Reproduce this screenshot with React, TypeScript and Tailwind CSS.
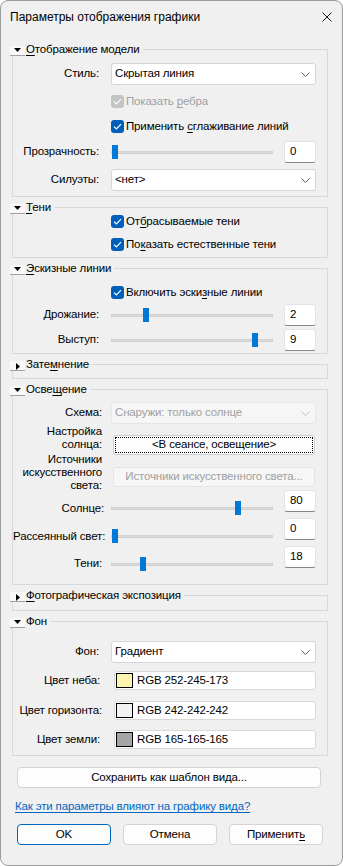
import React from "react";

const font = "font-['Liberation_Sans',Arial,sans-serif]";

function U({ children }: { children: React.ReactNode }) {
  return <span className="underline underline-offset-[2px] decoration-[1px]">{children}</span>;
}

function Tri({ open }: { open: boolean }) {
  return (
    <span className="w-[15px] h-[10px] bg-[#f9f9f9] border-b border-[#a0a0a0] flex items-start justify-center shrink-0">
      {open ? (
        <svg width="7" height="4" viewBox="0 0 7 4" className="mt-[2px]">
          <polygon points="0,0 7,0 3.5,4" fill="#000" />
        </svg>
      ) : (
        <svg width="4" height="7" viewBox="0 0 4 7" className="mt-[2px] ml-[1px]">
          <polygon points="0,0 4,3.5 0,7" fill="#000" />
        </svg>
      )}
    </span>
  );
}

function Group({
  title,
  open = true,
  children,
  className = "",
}: {
  title: React.ReactNode;
  open?: boolean;
  children?: React.ReactNode;
  className?: string;
}) {
  return (
    <fieldset className={`ml-[11px] w-[316px] border border-[#d9d9d9] ${className}`}>
      <legend className="-ml-[3px] pr-[3px] flex items-end h-[14px]">
        <Tri open={open} />
        <span className="ml-[1px] self-center leading-[14px]">{title}</span>
      </legend>
      {children}
    </fieldset>
  );
}

function Check({ disabled }: { disabled?: boolean }) {
  return (
    <span
      className={`w-[13px] h-[13px] rounded-[3px] flex items-center justify-center shrink-0 ${
        disabled ? "bg-[#c4c4c4]" : "bg-[#005fb8]"
      }`}
    >
      <svg width="9" height="7" viewBox="0 0 9 7">
        <path d="M1 3.6 L3.4 5.9 L8 1.2" stroke="#fff" strokeWidth="1.2" fill="none" />
      </svg>
    </span>
  );
}

function CheckRow({
  children,
  disabled,
  className = "",
}: {
  children: React.ReactNode;
  disabled?: boolean;
  className?: string;
}) {
  return (
    <div className={`flex items-center h-[14px] pl-[98px] ${className}`}>
      <Check disabled={disabled} />
      <span className={`ml-[2px] leading-[14px] ${disabled ? "text-[#a0a0a0]" : ""}`}>{children}</span>
    </div>
  );
}

function Chevron({ light }: { light?: boolean }) {
  return (
    <svg width="9" height="5" viewBox="0 0 9 5">
      <path d="M0.5 0.5 L4.5 4.5 L8.5 0.5" stroke={light ? "#c2c2c2" : "#5c5c5c"} strokeWidth="1" fill="none" />
    </svg>
  );
}

function Select({ value, disabled }: { value: string; disabled?: boolean }) {
  return (
    <div
      className={`w-[205px] h-[22px] rounded-[3px] border flex items-center justify-between pl-[3px] pr-[5px] ${
        disabled ? "bg-[#f6f6f6] border-[#e6e6e6] text-[#a0a0a0]" : "bg-white border-[#d6d6d6]"
      }`}
    >
      <span>{value}</span>
      <Chevron light={disabled} />
    </div>
  );
}

function Slider({ pos }: { pos: number }) {
  return (
    <div className="relative w-[162px] h-[14px] flex items-center shrink-0">
      <div className="w-full h-[3px] bg-[#dcdcdc] border border-[#d0d0d0]" />
      <div className="absolute top-0 w-[6px] h-[14px] bg-[#0078d4]" style={{ left: pos }} />
    </div>
  );
}

function NumBox({ value }: { value: string }) {
  return (
    <div className="w-[32px] h-[22px] bg-white border border-[#e3e3e3] border-b-[#868686] rounded-[3px] pl-[5px] flex items-center shrink-0">
      {value}
    </div>
  );
}

function ColorField({ color, text }: { color: string; text: string }) {
  return (
    <div className="ml-[14px] w-[202px] h-[19px] bg-white border border-[#d9d9d9] rounded-[3px] flex items-center">
      <span className="ml-[1px] w-[17px] h-[15px] border border-black shrink-0" style={{ background: color }} />
      <span className="ml-[4px]">{text}</span>
    </div>
  );
}

function Btn({
  children,
  primary,
  className = "",
}: {
  children: React.ReactNode;
  primary?: boolean;
  className?: string;
}) {
  return (
    <div
      className={`h-[21px] bg-[#fdfdfd] rounded-[4px] border flex items-center justify-center ${
        primary ? "border-[#0067c0]" : "border-[#d3d3d3]"
      } ${className}`}
    >
      {children}
    </div>
  );
}

export default function App() {
  return (
    <div className={`min-h-screen bg-white ${font} text-[11.5px] tracking-[-0.15px] text-black`}>
      <div className="w-[343px] h-[866px] bg-[#f0f0f0] border border-[#9b9b9b] rounded-[8px] flex flex-col">
        {/* title bar */}
        <div className="h-[31px] flex items-center justify-between pl-[9px] pr-[10px]">
          <span className="text-[12px] tracking-normal">Параметры отображения графики</span>
          <svg width="10" height="10" viewBox="0 0 10 10">
            <path d="M0.5 0.5 L9.5 9.5 M9.5 0.5 L0.5 9.5" stroke="#1a1a1a" strokeWidth="1" />
          </svg>
        </div>

        {/* G1 */}
        <Group
          className="mt-[10px] pb-[5px]"
          title={
            <>
              <U>О</U>тображение модели
            </>
          }
        >
          <div className="flex items-center mt-[7px]">
            <div className="w-[86px] text-right">Стиль:</div>
            <div className="ml-[12px]">
              <Select value="Скрытая линия" />
            </div>
          </div>
          <CheckRow disabled className="mt-[9px]">
            Показать <U>р</U>ебра
          </CheckRow>
          <CheckRow className="mt-[11px]">
            Применить <U>с</U>глаживание линий
          </CheckRow>
          <div className="flex items-center mt-[8px] h-[22px]">
            <div className="w-[86px] text-right">Прозрачность:</div>
            <div className="ml-[12px]">
              <Slider pos={1} />
            </div>
            <div className="ml-[11px]">
              <NumBox value="0" />
            </div>
          </div>
          <div className="flex items-center mt-[6px]">
            <div className="w-[86px] text-right">Силуэты:</div>
            <div className="ml-[12px]">
              <Select value="<нет>" />
            </div>
          </div>
        </Group>

        {/* G2 */}
        <Group
          className="mt-[3px] pb-[6px]"
          title={
            <>
              <U>Т</U>ени
            </>
          }
        >
          <CheckRow>
            От<U>б</U>расываемые тени
          </CheckRow>
          <CheckRow className="mt-[9px]">
            По<U>к</U>азать естественные тени
          </CheckRow>
        </Group>

        {/* G3 */}
        <Group
          className="mt-[3px] pb-[2px]"
          title={
            <>
              <U>Э</U>скизные линии
            </>
          }
        >
          <CheckRow className="mt-[10px]">
            Включить эски<U>з</U>ные линии
          </CheckRow>
          <div className="flex items-center mt-[5px] h-[22px]">
            <div className="w-[86px] text-right">Дрожание:</div>
            <div className="ml-[12px]">
              <Slider pos={32} />
            </div>
            <div className="ml-[11px]">
              <NumBox value="2" />
            </div>
          </div>
          <div className="flex items-center mt-[3px] h-[22px]">
            <div className="w-[86px] text-right">Выступ:</div>
            <div className="ml-[12px]">
              <Slider pos={141} />
            </div>
            <div className="ml-[11px]">
              <NumBox value="9" />
            </div>
          </div>
        </Group>

        {/* G4 */}
        <Group
          open={false}
          className="mt-[3px]"
          title={
            <>
              Зате<U>м</U>нение
            </>
          }
        >
          <div className="h-[7px]" />
        </Group>

        {/* G5 */}
        <Group
          className="mt-[3px] pb-[13px]"
          title={
            <>
              Осве<U>щ</U>ение
            </>
          }
        >
          <div className="flex items-center mt-[6px]">
            <div className="w-[89px] text-right">Схема:</div>
            <div className="ml-[9px]">
              <Select value="Снаружи: только солнце" disabled />
            </div>
          </div>
          <div className="flex items-start mt-[0px]">
            <div className="w-[89px] text-right leading-[13px] mt-[1px]">
              Настройка
              <br />
              солнца:
            </div>
            <div className="ml-[11px] mt-[11px] w-[202px] h-[20px] bg-[#fdfdfd] border border-[#cfcfcf] rounded-[3px] p-[1px]">
              <div className="w-full h-full border border-dotted border-black flex items-center justify-center">
                &lt;В сеансе, освещение&gt;
              </div>
            </div>
          </div>
          <div className="flex items-start -mt-[2px]">
            <div className="w-[89px] text-right leading-[13px]">
              Источники
              <br />
              искусственного
              <br />
              света:
            </div>
            <div className="ml-[11px] mt-[14px] w-[202px] h-[20px] bg-[#f6f6f6] border border-[#e4e4e4] rounded-[3px] flex items-center justify-center text-[#a0a0a0]">
              Источники искусственного света...
            </div>
          </div>
          <div className="flex items-start -mt-[2px]">
            <div className="w-[91px] text-right mt-[11px] leading-[14px] whitespace-nowrap">Солнце:</div>
            <div className="ml-[7px] mt-[11px]">
              <Slider pos={124} />
            </div>
            <div className="ml-[11px]">
              <NumBox value="80" />
            </div>
          </div>
          <div className="flex items-start mt-[3px]">
            <div className="w-[92px] text-right mt-[11px] leading-[14px] whitespace-nowrap">Рассеянный свет:</div>
            <div className="ml-[6px] mt-[11px]">
              <Slider pos={1} />
            </div>
            <div className="ml-[11px]">
              <NumBox value="0" />
            </div>
          </div>
          <div className="flex items-start mt-[3px]">
            <div className="w-[89px] text-right mt-[10px] leading-[14px]">Тени:</div>
            <div className="ml-[9px] mt-[11px]">
              <Slider pos={29} />
            </div>
            <div className="ml-[11px]">
              <NumBox value="18" />
            </div>
          </div>
        </Group>

        {/* G6 */}
        <Group
          open={false}
          className="mt-[3px]"
          title={
            <>
              <U>Ф</U>отографическая экспозиция
            </>
          }
        >
          <div className="h-[8px]" />
        </Group>

        {/* G7 */}
        <Group className="mt-[3px] pb-[6px]" title="Фон">
          <div className="flex items-center mt-[13px]">
            <div className="w-[86px] text-right">Фон:</div>
            <div className="ml-[12px]">
              <Select value="Градиент" />
            </div>
          </div>
          <div className="flex items-center mt-[8px]">
            <div className="w-[87px] text-right whitespace-nowrap">Цвет неба:</div>
            <ColorField color="rgb(252,245,173)" text="RGB 252-245-173" />
          </div>
          <div className="flex items-center mt-[11px]">
            <div className="w-[89px] text-right whitespace-nowrap">Цвет горизонта:</div>
            <div className="-ml-[2px]">
              <ColorField color="rgb(242,242,242)" text="RGB 242-242-242" />
            </div>
          </div>
          <div className="flex items-center mt-[10px]">
            <div className="w-[87px] text-right whitespace-nowrap">Цвет земли:</div>
            <ColorField color="rgb(165,165,165)" text="RGB 165-165-165" />
          </div>
        </Group>

        <Btn className="mt-[11px] ml-[16px] w-[304px]">Сохранить как шаблон вида...</Btn>

        <div className="mt-[11px] ml-[14px] h-[14px] leading-[14px] text-[#0067c0] underline underline-offset-[2px]">
          Как эти параметры влияют на графику вида?
        </div>

        <div className="mt-[11px] ml-[16px] flex gap-[12px]">
          <Btn primary className="w-[94px]">
            OK
          </Btn>
          <Btn className="w-[94px]">Отмена</Btn>
          <Btn className="w-[94px]">
            Применит<U>ь</U>
          </Btn>
        </div>
      </div>
    </div>
  );
}
